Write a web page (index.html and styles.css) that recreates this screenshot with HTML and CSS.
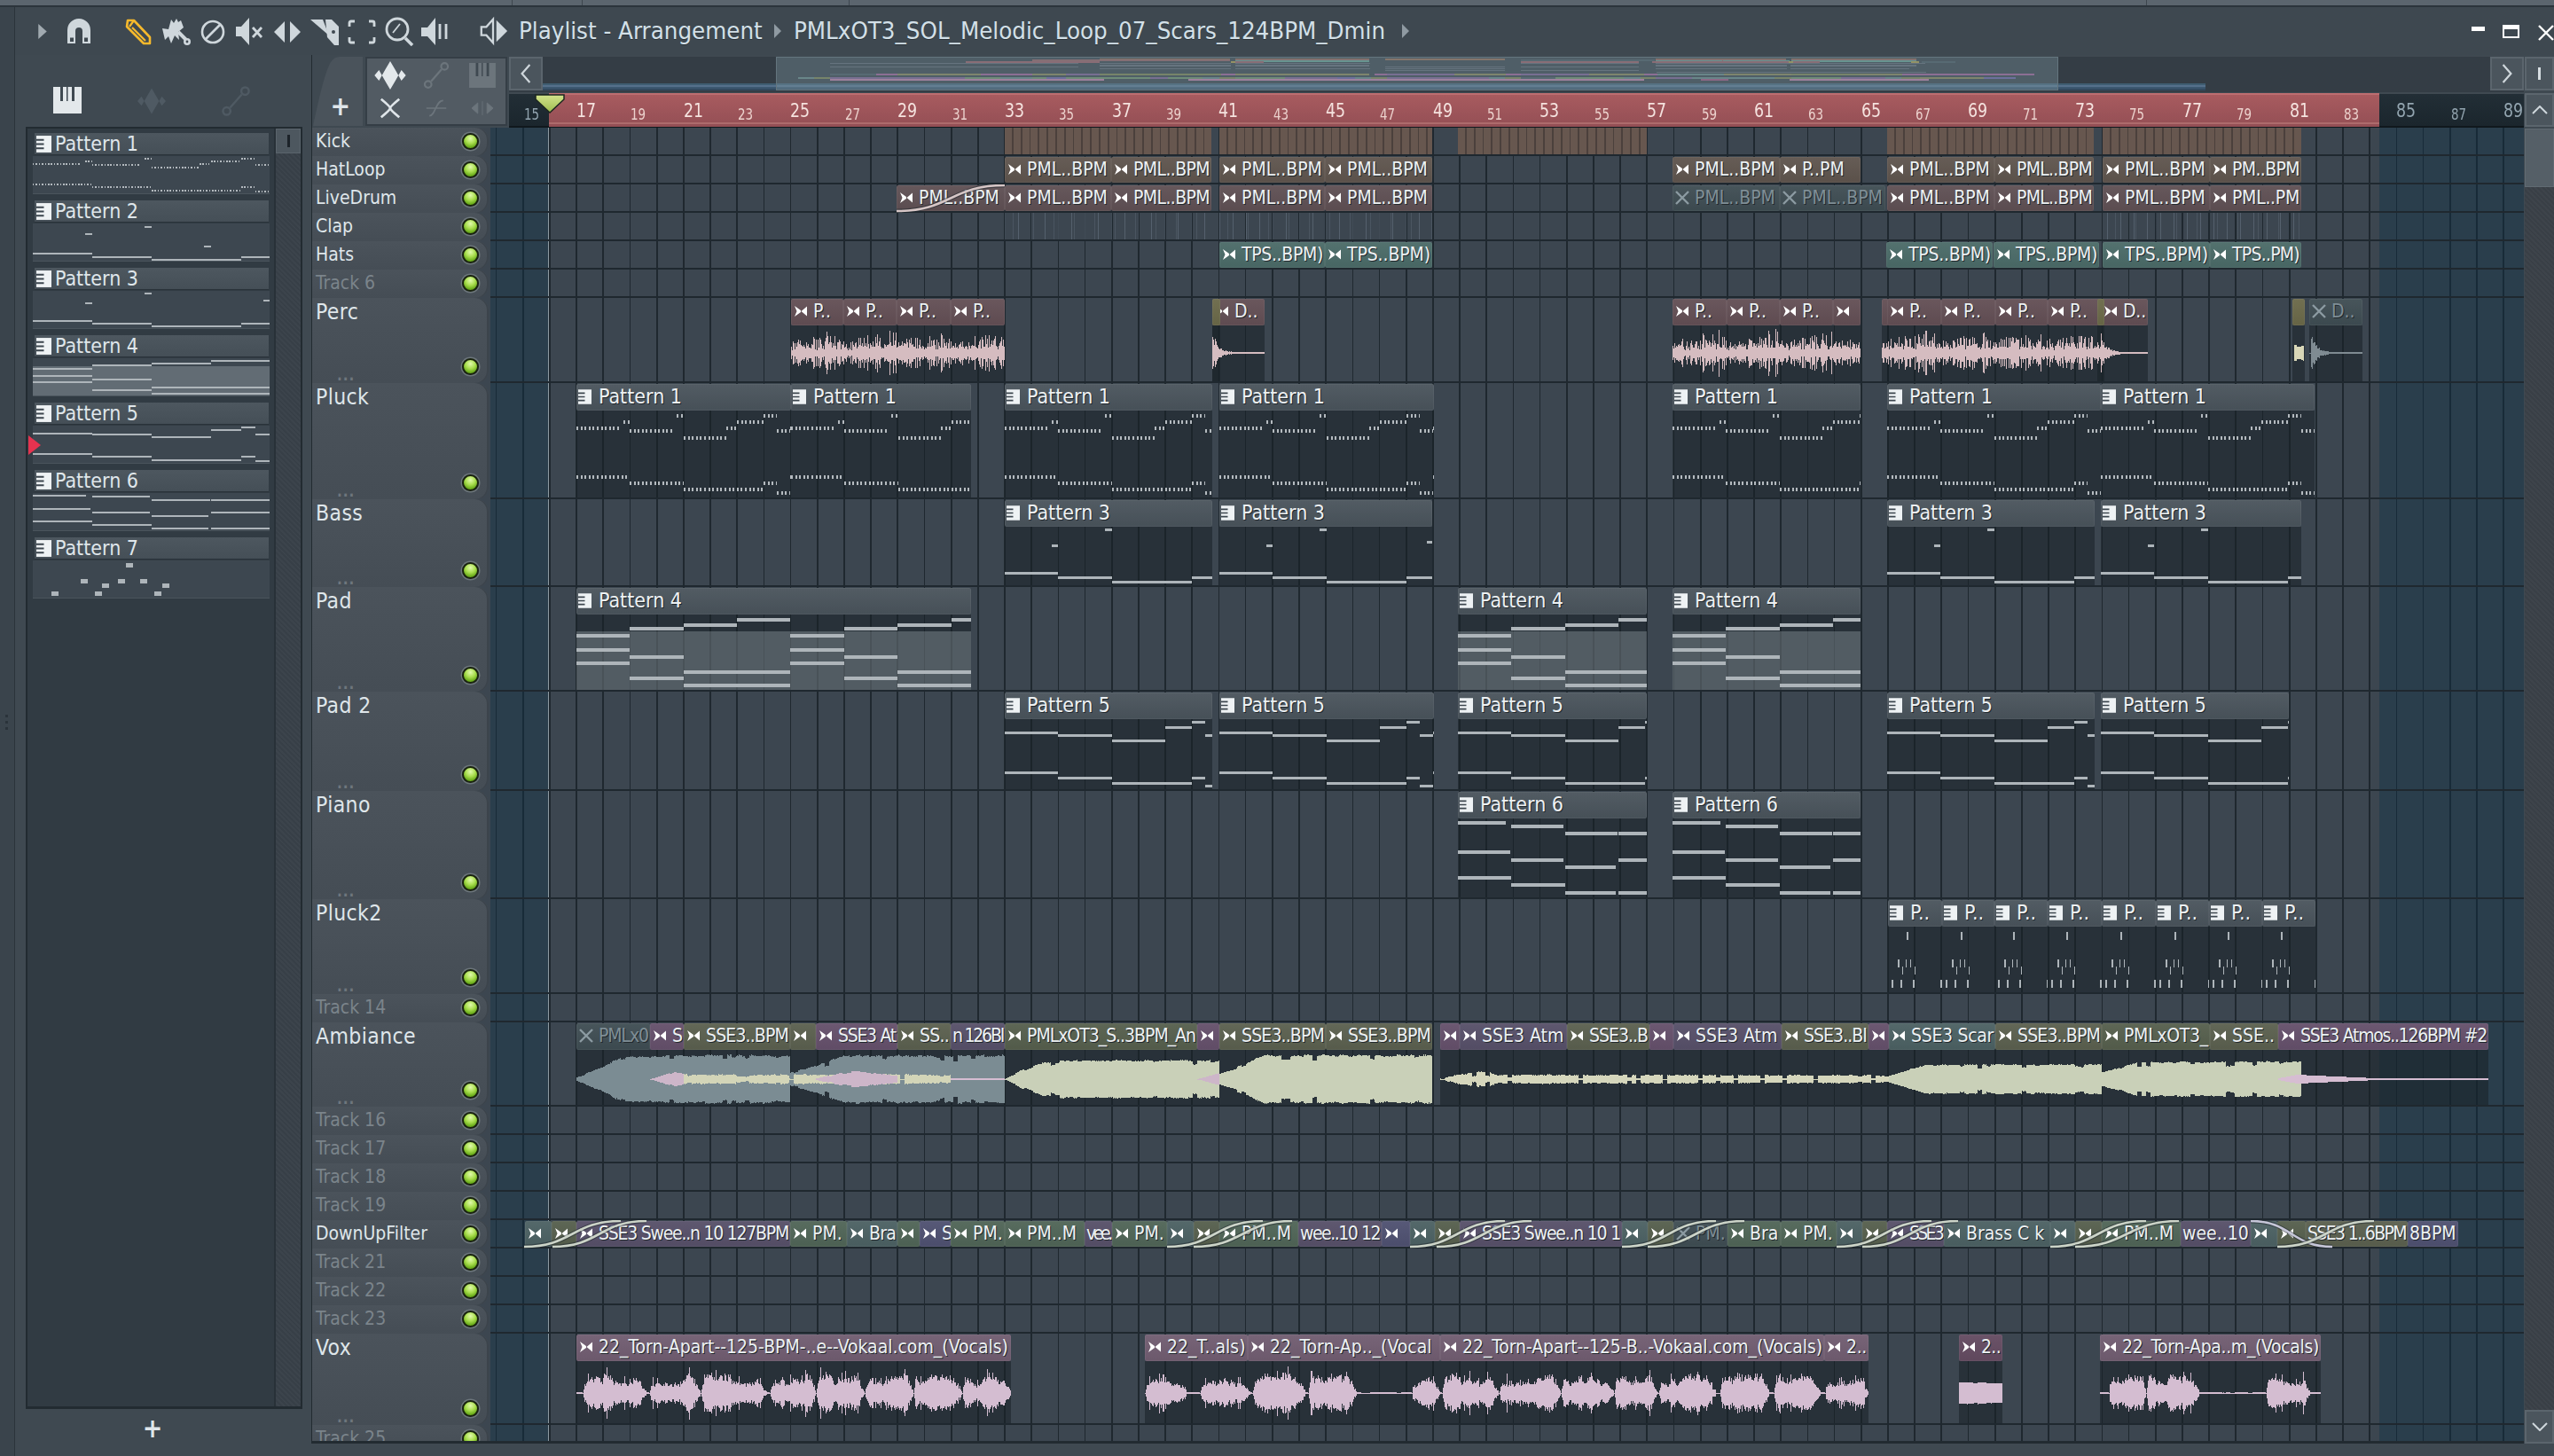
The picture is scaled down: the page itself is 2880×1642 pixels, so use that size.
FILE: index.html
```html
<!DOCTYPE html>
<html lang="en">
<head>
<meta charset="utf-8">
<title>Playlist - Arrangement</title>
<link rel="stylesheet" href="styles.css">
</head>
<body>
<svg class="defs" width="0" height="0" aria-hidden="true">
  <symbol id="i-audio" viewBox="0 0 18 18"><path d="M2 3 L9 8 L9 10 L2 15 L4.500 9Z M16 3.500 L9.500 9 L16 14.500 Z" fill="#fff"/></symbol>
  <symbol id="i-pat" viewBox="0 0 18 20"><path d="M0 0H18V20H0Z" fill="#eef2f4"/><path d="M0 4H9V6H0ZM0 9H9V11H0ZM0 14H9V16H0Z" fill="#3c464e"/></symbol>
  <symbol id="i-x" viewBox="0 0 18 18"><path d="M2 2 Q9 9 16 16 M16 2 Q9 9 2 16" stroke="#8c9ba2" stroke-width="2.400" fill="none"/></symbol>
  <symbol id="i-piano" viewBox="0 0 32 30"><path d="M0 0H32V30H0Z" fill="currentColor"/><path d="M8 0H11V16H8ZM15 0H16.500V16H15ZM21 0H24V16H21Z" fill="#3f4951"/></symbol>
  <symbol id="i-wave" viewBox="0 0 42 38"><path d="M0 19 L6 12 L10 19 L14 12 L21 0 L28 12 L32 19 L36 12 L42 19 L36 26 L32 19 L28 26 L21 38 L14 26 L10 19 L6 26Z" fill="currentColor"/></symbol>
  <symbol id="i-auto" viewBox="0 0 34 38"><circle cx="6" cy="31" r="4.500" fill="none" stroke="currentColor" stroke-width="2.600"/><circle cx="28" cy="7" r="4.500" fill="none" stroke="currentColor" stroke-width="2.600"/><path d="M10 27 L24 11" stroke="currentColor" stroke-width="2.600"/></symbol>
</svg>
<div class="app">
  <div class="top-strip"><span class="seg seg-a"></span><span class="seg seg-b"></span><span class="seg seg-c"></span><span class="seg seg-d"></span></div>
  <div class="win">
    <div class="dock"><span class="grip"></span></div>
    <div class="content">
      <header class="titlebar">
        <svg class="tb-arrow" viewBox="0 0 10 18"><path d="M0 0 L10 9 L0 18Z"/></svg>
        <svg class="tb tb-magnet" viewBox="0 0 40 34"><path d="M7 31 V16 A13 13 0 0 1 33 16 V31 H24 V17 A4 4 0 0 0 16 17 V31Z" fill="#cfd7dc"/><path d="M10 24.500 H14 V29 H10ZM26 24.500 H30 V29 H26Z" fill="#3f4951"/></svg>
        <svg class="tb tb-first" viewBox="0 0 40 34"><path d="M8 5 H15 L33 24 L33 31 L26 31 L7 12Z" fill="#3f4951" stroke="#f6b92c" stroke-width="2.600" stroke-linejoin="round"/><path d="M15 5 L10 12 M13 13 L28 28" stroke="#f6b92c" stroke-width="2.200"/></svg>
        <svg class="tb" viewBox="0 0 40 34"><path d="M5 14 L12 15 L15 4 L18 8 L21 3 L23 7 L26 5 L29 13 L23 18 L24 27 L19 22 L15 31 L12 23 L8 27Z" fill="#cfd7dc"/><path d="M23 18 L32 27" stroke="#cfd7dc" stroke-width="4"/><circle cx="33" cy="29" r="4" fill="#cfd7dc"/><circle cx="33" cy="29" r="1.400" fill="#3f4951"/></svg>
        <svg class="tb" viewBox="0 0 40 34"><circle cx="20" cy="18" r="12" fill="none" stroke="#cfd7dc" stroke-width="2.600"/><path d="M12 26 L28 10" stroke="#cfd7dc" stroke-width="2.600"/></svg>
        <svg class="tb" viewBox="0 0 40 34"><path d="M4 12 H10 L19 2 V33 L10 23 H4Z" fill="#cfd7dc"/><path d="M23 13 L33 24 M33 13 L23 24" stroke="#cfd7dc" stroke-width="2.800"/></svg>
        <svg class="tb" viewBox="0 0 40 34"><path d="M5 18 L17 6 V30Z M35 18 L23 6 V30Z" fill="#cfd7dc"/></svg>
        <svg class="tb" viewBox="0 0 40 34"><path d="M4 4 H18 L25 22 Z" fill="#cfd7dc"/><path d="M21 4 H28 L36 12 V33 H31 L23 24Z" fill="#cfd7dc"/><circle cx="30" cy="18" r="2" fill="#3f4951"/></svg>
        <svg class="tb" viewBox="0 0 40 34"><path d="M12 6 H8 Q6 6 6 8 V12 M28 6 H32 Q34 6 34 8 V12 M12 30 H8 Q6 30 6 28 V24 M28 30 H32 Q34 30 34 28 V24" fill="none" stroke="#cfd7dc" stroke-width="2.800"/></svg>
        <svg class="tb" viewBox="0 0 40 34"><circle cx="18" cy="15" r="12" fill="none" stroke="#cfd7dc" stroke-width="2.800"/><path d="M27 25 L35 33" stroke="#cfd7dc" stroke-width="3.500"/><path d="M13 19 L21 9" stroke="#cfd7dc" stroke-width="1.800"/></svg>
        <svg class="tb" viewBox="0 0 40 34"><path d="M3 13 H10 L19 2 V33 L10 23 H3Z" fill="#cfd7dc"/><path d="M24 9 V26 M31 9 V26" stroke="#cfd7dc" stroke-width="2.800"/></svg>
        <svg class="tb tb-spk" viewBox="0 0 40 36"><path d="M6 13 H12 L20 4 V32 L12 23 H6Z" fill="none" stroke="#cfd7dc" stroke-width="2.400"/><path d="M24 5 L37 18 L24 31Z" fill="#cfd7dc"/></svg>
        <span class="crumb crumb-a">Playlist - Arrangement</span>
        <svg class="crumb-arrow" viewBox="0 0 8 16"><path d="M0 0 L8 8 L0 16Z"/></svg>
        <span class="crumb crumb-b">PMLxOT3_SOL_Melodic_Loop_07_Scars_124BPM_Dmin</span>
        <svg class="crumb-arrow" viewBox="0 0 8 16"><path d="M0 0 L8 8 L0 16Z"/></svg>
        <span class="win-min"></span>
        <span class="win-max"></span>
        <svg class="win-close" viewBox="0 0 18 18"><path d="M1 1 L17 17 M17 1 L1 17" stroke="#fff" stroke-width="2.400"/></svg>
      </header>
      <div class="panes">
        <aside class="picker">
          <div class="picker-tabs">
            <svg class="ptab ptab-on"><use href="#i-piano"/></svg>
            <svg class="ptab"><use href="#i-wave"/></svg>
            <svg class="ptab"><use href="#i-auto"/></svg>
          </div>
          <div class="picker-list">
            <div class="pattern-col" id="patterns"></div>
            <div class="hatch-col"><span class="thumb-small"><i></i></span></div>
          </div>
          <div class="picker-add">+</div>
        </aside>
        <section class="playlist">
          <div class="pl-main">
            <div class="pl-head">
              <div class="tab"><span>+</span></div>
              <div class="tools">
                <svg class="tool"><use href="#i-wave"/></svg>
                <svg class="tool tool-dim"><use href="#i-auto"/></svg>
                <svg class="tool tool-dim tool-pno"><use href="#i-piano"/></svg>
                <svg class="tool tool-s" viewBox="0 0 26 28"><path d="M2 3 Q13 12 13 14 Q13 16 2 25 M24 3 Q13 12 13 14 Q13 16 24 25" fill="none" stroke="#dfe5e9" stroke-width="3"/></svg>
                <svg class="tool tool-s tool-dim" viewBox="0 0 30 28"><path d="M2 14 H28 M6 24 C14 24 14 4 24 4" fill="none" stroke="currentColor" stroke-width="2"/></svg>
                <svg class="tool tool-s tool-dim" viewBox="0 0 30 28"><path d="M1 14 L9 7 V21Z M29 14 L21 7 V21Z M15 5 V23" fill="currentColor" stroke="currentColor" stroke-width="1"/></svg>
              </div>
              <div class="timeline">
                <div class="ov-row">
                  <div class="ov-btn"><svg viewBox="0 0 12 20"><path d="M10 1 L2 10 L10 19" fill="none" stroke="#cfd7dc" stroke-width="2"/></svg></div>
                  <div class="ov-strip" id="overview"><div class="ov-band"></div><div class="ov-view"></div></div>
                  <div class="ov-btn"><svg viewBox="0 0 12 20"><path d="M2 1 L10 10 L2 19" fill="none" stroke="#cfd7dc" stroke-width="2"/></svg></div>
                </div>
                <div class="ruler" id="ruler">
                  <div class="ruler-red"></div>
                  <svg class="playhead" viewBox="0 0 34 22"><defs><linearGradient id="ph" x1="0" y1="0" x2="0" y2="1"><stop offset="0" stop-color="#d3e38c"/><stop offset="1" stop-color="#9dbb4e"/></linearGradient></defs><path d="M1 1 H33 V6 L17 21 L1 6Z" fill="url(#ph)" stroke="#1c2620" stroke-width="1.500"/></svg>
                </div>
              </div>
            </div>
            <div class="tracks" id="tracks">
              <div class="gridbg"><div class="tint tint-l"></div><div class="tint tint-r"></div><div class="play-line"></div></div>
            </div>
          </div>
          <div class="vscroll">
            <div class="vs-btn vs-i"><i></i></div>
            <div class="vs-btn vs-up"><svg viewBox="0 0 18 10"><path d="M1 9 L9 1 L17 9" fill="none" stroke="#cfd7dc" stroke-width="2"/></svg></div>
            <div class="vs-thumb"></div>
            <div class="vs-track"></div>
            <div class="vs-btn vs-dn"><svg viewBox="0 0 18 10"><path d="M1 1 L9 9 L17 1" fill="none" stroke="#cfd7dc" stroke-width="2"/></svg></div>
          </div>
        </section>
      </div>
    </div>
  </div>
</div>
<script src="app.js"></script>
</body>
</html>
```
FILE: styles.css
```css
* { box-sizing: border-box; }
html, body { margin: 0; padding: 0; background: #3f4951; }
body {
  width: 2880px; height: 1642px; overflow: hidden;
  font-family: "DejaVu Sans Condensed", "DejaVu Sans", sans-serif;
  font-stretch: condensed; color: #dfe6ea;
}
.defs { position: absolute; }
.app { width: 2880px; height: 1642px; display: flex; flex-direction: column; }

.top-strip { height: 8px; flex: none; background: #5b656e; border-bottom: 2px solid #2b343b; display: flex; }
.seg { display: block; height: 100%; border-right: 1px solid #3d464e; }
.seg-a { width: 578px; } .seg-b { width: 79px; } .seg-c { width: 301px; } .seg-d { width: 1463px; }

.win { flex: 1; display: flex; min-height: 0; }
.dock { width: 17px; flex: none; background: #3a444c; border-right: 1px solid #2b343b; position: relative; }
.grip { position: absolute; left: 6px; top: 798px; width: 3px; height: 18px; background: repeating-linear-gradient(#2a333a 0 3px, transparent 3px 7px); }
.content { flex: 1; display: flex; flex-direction: column; min-width: 0; }

.titlebar { height: 54px; flex: none; display: flex; align-items: center; background: #3e4850; }
.tb-arrow { width: 10px; height: 17px; fill: #a1aab0; margin-left: 26px; margin-right: 16px; }
.tb { width: 40px; height: 34px; margin-right: 2px; flex: none; }
.tb-first { margin-left: 27px; }
.tb-magnet { margin-right: 0; }
.tb-spk { margin-left: 22px; margin-right: 9px; }
.crumb { font-size: 27.4px; color: #d3e0e8; white-space: nowrap; line-height: 1; text-shadow: 0 1px 0 #2a3238; }
.crumb-a { width: 274px; flex: none; }
.crumb-b { width: 672px; flex: none; }
.crumb-arrow { width: 8px; height: 16px; fill: #8f9aa2; margin: 0 14px; flex: none; }
.win-min { margin-left: auto; width: 15px; height: 5px; background: #fff; align-self: flex-start; margin-top: 22px; }
.win-max { margin-left: 20px; width: 19px; height: 15px; border: 2px solid #fff; border-top-width: 5px; align-self: flex-start; margin-top: 20px; }
.win-close { margin-left: 21px; width: 18px; height: 18px; align-self: flex-start; margin-top: 20px; flex: none; }

.panes { flex: 1; display: flex; min-height: 0; padding-bottom: 14px; }

.picker { width: 334px; flex: none; display: flex; flex-direction: column; background: #3f4951; }
.picker-tabs { height: 81px; flex: none; display: flex; padding-left: 43px; align-items: flex-start; }
.ptab { width: 32px; height: 38px; margin-top: 33px; margin-right: 63px; color: #4f5a63; overflow: visible; }
.ptab-on { color: #e3e8eb; height: 30px; margin-top: 36px; }
.picker-list { margin-left: 12px; width: 312px; height: 1446px; flex: none; display: flex; border: 2px solid #222b31; border-bottom-width: 3px; background: #313b43; }
.pattern-col { flex: 1; padding: 5px 5px 0 6px; min-width: 0; }
.hatch-col { width: 30px; flex: none; border-left: 2px solid #283138; background: repeating-linear-gradient(45deg, #373f47 0 2px, #3c444c 2px 4px); }
.thumb-small { display: flex; height: 28px; background: #4d575f; border: 1px solid #5a646c; align-items: center; justify-content: center; }
.thumb-small i { display: block; width: 3px; height: 14px; background: #1c2329; }
.picker-add { flex: 1; text-align: center; font-size: 30px; font-weight: bold; line-height: 44px; color: #dfe6ea; padding-right: 24px; }

.pat-item { height: 76px; position: relative; }
.pat-head { height: 25px; margin: 0 1px 0 2px; background: linear-gradient(#4d575f, #454f57); border-bottom: 1px solid #2a333a; display: flex; align-items: center; padding-left: 2px; font-size: 23px; white-space: nowrap; color: #dfe6ea; }
.pat-icon { width: 17px; height: 19px; flex: none; margin-right: 4px; }
.pat-prev { height: 43px; margin-top: 1px; background: #3d4750; position: relative; overflow: hidden; border-bottom: 1px solid #4a545c; }
.pat-mark { position: absolute; left: -5px; top: 37px; width: 14px; height: 22px; background: #e5334f; clip-path: polygon(0 0, 100% 50%, 0 100%); }

.playlist { flex: 1; display: flex; min-width: 0; }
.pl-main { width: 2495px; flex: none; display: flex; flex-direction: column; border-left: 1px solid #222b31; border-bottom: 3px solid #222b31; }
.pl-head { height: 82px; flex: none; display: flex; padding-top: 2px; }
.tab { width: 58px; height: 78px; flex: none; background: #4a535b; clip-path: path("M0 78 C8 40 14 16 20 6 Q24 0 30 0 H56 V78Z"); display: flex; align-items: flex-end; justify-content: flex-end; padding-right: 16px; font-size: 30px; font-weight: bold; line-height: 44px; margin-left: 1px; }
.tools { width: 160px; height: 78px; flex: none; margin-left: 1px; margin-right: 2px; border: 2px solid #353e46; background: #525b63; display: grid; grid-template-columns: repeat(3, 1fr); grid-template-rows: 1fr 1fr; place-items: center; color: #e3e8eb; }
.tool { width: 38px; height: 32px; }
.tool-dim { color: #6c757c; }
.tool-pno { width: 30px; height: 28px; }
.tool-s { width: 26px; height: 26px; }

.timeline { flex: 1; min-width: 0; display: flex; flex-direction: column; }
.ov-row { height: 40px; flex: none; display: flex; background: #343d45; }
.ov-btn { width: 38px; height: 38px; flex: none; background: #4b555d; border: 2px solid #5b656d; display: flex; align-items: center; justify-content: center; }
.ov-btn svg { width: 14px; height: 22px; }
.ov-strip { flex: 1; position: relative; overflow: hidden; }
.ov-band { position: absolute; left: 0; width: 1875px; top: 30px; height: 8px; background: linear-gradient(#3f5d72 0 25%, #55708a 25% 50%, #3c5870 50% 75%, #33495e 75%); }
.ov-view { position: absolute; left: 263px; width: 1446px; top: 0; height: 38px; background: rgba(124,150,160,.38); border: 1px solid #64757e; }
.mini { position: absolute; height: 1.5px; background: var(--c); filter: brightness(1.4); }
.ruler { height: 38px; margin-top: 2px; flex: none; position: relative; background: linear-gradient(#222e36, #1b262d); border-bottom: 2px solid #10181d; }
.ruler-red { position: absolute; left: 45px; width: 2064px; top: -1px; bottom: -1px; background: linear-gradient(#bd6e70 0 2px, #a85b5f 2px, #965056 88%, #ad6b6c 88% 92%, #944f55 92%); }
.playhead { position: absolute; left: 29px; top: 0; width: 34px; height: 22px; z-index: 3; overflow: visible; }
.rl { position: absolute; top: 7px; line-height: 28px; white-space: nowrap; z-index: 2; }
.rl-big { font-size: 22px; color: #f5e3df; top: 5px; transform: scaleX(.88); transform-origin: 0 50%; }
.rl-small { font-size: 17px; color: #ecd2cd; top: 9px; transform: scaleX(.88); transform-origin: 0 50%; }
.rl-off { color: #93a5b0; }

.tracks { flex: 1; min-height: 0; position: relative; overflow: hidden; background: #3c4650; }
.gridbg { position: absolute; left: 201px; right: 0; top: 0; bottom: 0; background: repeating-linear-gradient(90deg, transparent 0, transparent 5.760px, #1f282f 5.760px, #1f282f 7.460px, transparent 7.460px, transparent 30.180px); }
.tint { position: absolute; top: 0; bottom: 0; background: rgba(12,50,72,.38); }
.tint-l { left: 0; width: 66px; }
.tint-r { left: 2130px; right: 0; }
.play-line { position: absolute; left: 65px; top: 0; bottom: 0; width: 1px; background: #8d9aa2; z-index: 1; }

.row { display: flex; position: relative; z-index: 2; flex: none; }
.label { width: 199px; flex: none; margin-right: 2px; position: relative; display: flex; align-items: flex-start; justify-content: space-between; padding-left: 4px; padding-right: 11px; background: linear-gradient(#4b535b, #454d55); border-radius: 0 14px 14px 0; box-shadow: inset -2px 0 0 #3c444c; }
.label-name { font-size: 21px; line-height: 31px; color: #dfe6ea; white-space: nowrap; }
.row-big .label-name { font-size: 24.5px; letter-spacing: .4px; }
.row-dim .label-name { color: #7b848b; }
.dots { position: absolute; left: 28px; bottom: 2px; font-size: 17px; line-height: 14px; font-weight: bold; color: #6e767d; letter-spacing: 1px; }
.led { width: 19px; height: 19px; flex: none; align-self: flex-end; margin-bottom: 7px; border-radius: 50%; border: 2px solid #1a240f; box-shadow: 0 0 0 1.5px #6c757b; background: radial-gradient(circle at 50% 28%, #e0f9ac 0, #a9de4e 42%, #69ab1a 75%); }
.row-big .led { margin-bottom: 9px; }
.lane { flex: 1; position: relative; border-bottom: 2px solid #1f282f; min-width: 0; }
.wave { position: absolute; left: 0; top: 0; z-index: 3; }

.clip { position: absolute; top: 1px; display: flex; flex-direction: column; overflow: hidden; }
.clip-small { bottom: 0; }
.clip-big { bottom: 0; }
.clip-head { height: 30px; flex: none; background: linear-gradient(rgba(255,255,255,.05), rgba(0,0,0,.04)), var(--c); border-radius: 2px; box-shadow: inset 0 0 0 1px rgba(255,255,255,.05); display: flex; align-items: center; padding: 0 0 2px 2px; overflow: hidden; white-space: nowrap; font-size: 21px; color: #edf1f3; text-shadow: 1px 1px 0 #20272c; }
.clip-small .clip-head { height: 100%; }
.clip-pattern .clip-head { font-size: 23px; }
.clip-icon { width: 18px; height: 18px; flex: none; margin-right: 5px; }
.clip-picon { width: 15px; height: 19px; flex: none; margin-right: 8px; }
.clip-body { flex: 1; position: relative; background: rgba(24,32,38,.55); overflow: hidden; }

.c-brown { --c: #5e544d; } .c-rose { --c: #5e4f53; } .c-perc { --c: #624e54; } .c-teal { --c: #4a6a67; }
.c-pat { --c: #49535b; } .c-pink { --c: #644f6a; } .c-olive { --c: #5a5f4e; } .c-moss { --c: #555e4c; }
.c-purple { --c: #564f68; } .c-green { --c: #4f6456; } .c-slate { --c: #4b6062; } .c-blue { --c: #4e5070; }
.c-vox { --c: #705c70; } .c-mute { --c: #3e4c52; } .c-khaki { --c: #6a6848; } .c-voxd { --c: #634a60; }
.c-mute .clip-head { color: #7f8e96; }
.kick { position: absolute; top: 0; bottom: 0; background: repeating-linear-gradient(90deg, #67574f 0, #67574f 8px, #4b403c 8px, #4b403c 9.800px); }
.clap { position: absolute; top: 0; bottom: 0; background: repeating-linear-gradient(90deg, rgba(150,165,185,.28) 0 1px, transparent 1px 15px), repeating-linear-gradient(90deg, transparent 0 9px, rgba(150,165,185,.16) 9px 10px, transparent 10px 23px); }
.curve { position: absolute; left: 0; top: 0; z-index: 4; }

.note { position: absolute; background: #aeb5ba; }
.tick { background: repeating-linear-gradient(90deg, #b4babf 0 2px, transparent 2px 4.600px); }
.pat-prev .tick { background: repeating-linear-gradient(90deg, #b4babf 0 1.500px, transparent 1.500px 3.400px); }
.wash { position: absolute; top: 22%; bottom: 0; background: rgba(205,215,220,.26); }

.vscroll { flex: 1; display: flex; flex-direction: column; padding-top: 2px; padding-left: 1px; min-width: 0; }
.vs-btn { height: 38px; flex: none; background: #4b555d; border: 2px solid #5b656d; display: flex; align-items: center; justify-content: center; }
.vs-btn svg { width: 18px; height: 10px; }
.vs-i i { display: block; width: 3px; height: 14px; background: #d6dde1; }
.vs-up { margin-top: 3px; }
.vs-thumb { height: 66px; flex: none; margin-top: 2px; background: #555f67; border: 1px solid #606a72; }
.vs-track { flex: 1; background: repeating-linear-gradient(45deg, #393f46 0 2px, #3e444b 2px 4px); }
```
FILE: app.js
```js
var LANE_X = 553, BAR = 30.18;
function bx(b) { return 650 + (b - 17) * BAR; }

var seed = 12345;
function rnd() { seed = (seed * 16807) % 2147483647; return (seed - 1) / 2147483646; }

/* ---- pattern note data: [start bar, end bar, vertical position] ---- */
var PAT = {
  1: { tick: 1, th: 4, n: [[0,1.6,.19],[1.75,2,.12],[2,3.6,.23],[3.75,4,.04],[4,5.6,.31],[5.6,5.95,.19],[6,7,.12],[7,7.5,.04],[7.5,8,.23],[0,2,.78],[2,4,.86],[4,7,.94],[7,7.5,.86],[7.5,8,.98]] },
  2: { th: 3, n: [[0,2,.82],[2,4,.92],[4,7,1],[7,8,.92],[1.75,2,.28],[3.75,4,.08],[5.75,6,.62]] },
  3: { th: 3, n: [[0,2,.82],[2,4,.9],[4,7,.985],[7,8,.9],[1.75,2,.33],[3.75,4,.04],[7.75,8,.25]] },
  4: { th: 4, wash: 1, n: [[0,2,.27],[0,2,.48],[0,2,.66],[2,4,.17],[2,4,.57],[2,4,.88],[4,6,.13],[4,8,.79],[4,8,.97],[6,8,.05]] },
  5: { th: 3, n: [[0,2,.19],[2,4,.22],[4,6,.31],[6,7,.105],[7,7.5,.03],[7.5,8,.22],[0,2,.78],[2,4,.86],[4,7,.94],[7,7.5,.86],[7.5,8,.98]] },
  6: { th: 4, n: [[0,1.8,.04],[2,3.95,.085],[4,5.97,.18],[6,8,.18],[0,1.95,.43],[2,3.95,.53],[4,5.9,.63],[6,8,.53],[0,2,.77],[2,4,.87],[4,5.9,.975],[6,8,.975]] },
  7: { th: 9, n: [[.62,.87,.94],[1.6,1.85,.58],[2.08,2.33,.94],[2.32,2.57,.7],[2.86,3.11,.58],[3.12,3.37,.09],[3.6,3.85,.58],[4.08,4.33,.94],[4.36,4.61,.7]] }
};

function drawNotes(host, id, unit, H, th, span) {
  var p = PAT[id], total = span || unit * 8, loop = unit * 8;
  for (var k = 0; k * loop < total; k++) {
    var off = k * loop;
    if (p.wash) {
      var w = document.createElement('div');
      w.className = 'wash';
      w.style.left = off + 'px';
      w.style.width = loop + 'px';
      host.appendChild(w);
    }
    p.n.forEach(function (n) {
      var e = document.createElement('div');
      e.className = p.tick ? 'note tick' : 'note';
      e.style.left = (off + n[0] * unit) + 'px';
      e.style.width = ((n[1] - n[0]) * unit) + 'px';
      e.style.top = (n[2] * (H - th)) + 'px';
      e.style.height = th + 'px';
      host.appendChild(e);
    });
  }
}

/* ---- pattern picker ---- */
var list = document.getElementById('patterns');
for (var i = 1; i <= 7; i++) {
  var it = document.createElement('div');
  it.className = 'pat-item';
  it.innerHTML = '<div class="pat-head"><svg class="pat-icon"><use href="#i-pat"/></svg>Pattern ' + i + '</div><div class="pat-prev"></div>' + (i === 5 ? '<div class="pat-mark"></div>' : '');
  list.appendChild(it);
  var prev = it.querySelector('.pat-prev');
  drawNotes(prev, i, 33.5, 42, i === 7 ? 5 : 2, 0);
}

/* ---- ruler ---- */
var ruler = document.getElementById('ruler');
for (var b = 15; b <= 89; b += 2) {
  var s = document.createElement('span');
  var big = (b - 17) % 4 === 0;
  s.className = 'rl ' + (big ? 'rl-big' : 'rl-small') + ((b > 83 || b < 17) ? ' rl-off' : '');
  s.textContent = b;
  s.style.left = (bx(b) - 574 + (big ? 0 : 1)) + 'px';
  ruler.appendChild(s);
}

/* ---- tracks ---- */
var A = 'a', P = 'p', X = 'x';
function pat(id, xs) { return xs.map(function (x) { return [x[0], x[1], 'pat', 'Pattern ' + id, P, id]; }); }

var HAT = [[1133,1253,'PML..BPM'],[1253,1366,'PML..BPM'],[1375,1494,'PML..BPM'],[1494,1615,'PML..BPM'],[1886,2007,'PML..BPM'],[2007,2098,'P..PM'],[2128,2249,'PML..BPM'],[2249,2361,'PML..BPM'],[2371,2492,'PML..BPM'],[2492,2595,'PM..BPM']];
var LIVE = [[1011,1133,'PML..BPM'],[1133,1253,'PML..BPM'],[1253,1366,'PML..BPM'],[1375,1494,'PML..BPM'],[1494,1615,'PML..BPM'],[1886,2007,'PML..BPM',1],[2007,2126,'PML..BPM',1],[2128,2249,'PML..BPM'],[2249,2361,'PML..BPM'],[2371,2492,'PML..BPM'],[2492,2595,'PML..PM']];

var ROWS = [
  { n: 'Kick', h: 32, kick: [[1133,1366],[1375,1615],[1644,1857],[2128,2361],[2371,2595]] },
  { n: 'HatLoop', h: 32, clips: HAT.map(function (c) { return [c[0], c[1], 'brown', c[2], A]; }) },
  { n: 'LiveDrum', h: 32, clips: LIVE.map(function (c) { return [c[0], c[1], c[3] ? 'mute' : 'rose', c[2], c[3] ? X : A]; }), curves: [[1011,1133,'#d6c6c6',0]] },
  { n: 'Clap', h: 32, clap: [[1133,1366],[1375,1615],[2376,2595]] },
  { n: 'Hats', h: 32, clips: [[1375,1494,'teal','TPS..BPM)',A],[1494,1615,'teal','TPS..BPM)',A],[2127,2247,'teal','TPS..BPM)',A],[2248,2367,'teal','TPS..BPM)',A],[2371,2492,'teal','TPS..BPM)',A],[2492,2595,'teal','TPS..PM)',A]] },
  { n: 'Track 6', h: 32, dim: 1 },
  { n: 'Perc', h: 96, big: 1, clips: [
    [892,951,'perc','P..',A],[951,1011,'perc','P..',A],[1011,1072,'perc','P..',A],[1072,1133,'perc','P..',A],
    [1367,1426,'perc','D..',A],[1367,1376,'khaki','',0],
    [1886,1947,'perc','P..',A],[1947,2007,'perc','P..',A],[2007,2067,'perc','P..',A],[2067,2098,'perc','',A],
    [2122,2130,'perc','',0],[2128,2189,'perc','P..',A],[2189,2250,'perc','P..',A],[2250,2309,'perc','P..',A],[2309,2369,'perc','P..',A],
    [2369,2422,'perc','D..',A],[2365,2373,'khaki','',0],
    [2585,2599,'khaki','',0],[2604,2664,'mute','D..',X]] },
  { n: 'Pluck', h: 131, big: 1, clips: pat(1, [[650,892],[892,1095],[1133,1367],[1375,1617],[1886,2098],[2128,2369],[2369,2610]]) },
  { n: 'Bass', h: 99, big: 1, clips: pat(3, [[1133,1367],[1375,1615],[2128,2362],[2369,2595]]) },
  { n: 'Pad', h: 118, big: 1, clips: pat(4, [[650,1095],[1644,1857],[1886,2098]]) },
  { n: 'Pad 2', h: 112, big: 1, clips: pat(5, [[1133,1367],[1375,1617],[1644,1857],[2128,2362],[2369,2581]]) },
  { n: 'Piano', h: 122, big: 1, clips: pat(6, [[1644,1857],[1886,2098]]) },
  { n: 'Pluck2', h: 107, big: 1, clips: [2129,2190,2249,2309,2370,2431,2491,2551].map(function (x, i, a) { return [x, a[i + 1] || 2611, 'pat', 'P..', P, 7]; }) },
  { n: 'Track 14', h: 32, dim: 1 },
  { n: 'Ambiance', h: 95, big: 1, clips: [
    [650,733,'mute','PMLx0',X],[733,771,'pink','S',A],[771,891,'olive','SSE3..BPM',A],[891,920,'olive','',A],
    [920,1012,'pink','SSE3 At',A],[1012,1072,'olive','SS..',A],[1072,1133,'purple','n 126BI',0],
    [1133,1350,'moss','PMLxOT3_S..3BPM_An',A],[1350,1375,'pink','',A],[1375,1495,'olive','SSE3..BPM',A],[1495,1615,'olive','SSE3..BPM',A],
    [1624,1646,'pink','',A],[1646,1767,'purple','SSE3 Atm',A],[1767,1860,'olive','SSE3..B',A],[1860,1887,'pink','',A],
    [1887,2009,'purple','SSE3 Atm',A],[2009,2107,'olive','SSE3..BI',A],[2107,2130,'pink','',A],[2130,2250,'slate','SSE3 Scar',A],
    [2250,2370,'olive','SSE3..BPM',A],[2370,2492,'moss','PMLxOT3_',A],[2492,2569,'olive','SSE..',A],[2569,2806,'pink','SSE3 Atmos..126BPM #2',A]] },
  { n: 'Track 16', h: 32, dim: 1 },
  { n: 'Track 17', h: 32, dim: 1 },
  { n: 'Track 18', h: 32, dim: 1 },
  { n: 'Track 19', h: 32, dim: 1 },
  { n: 'DownUpFilter', h: 32, clips: [
    [592,622,'slate','',A],[622,650,'moss','',A],[650,891,'purple','SSE3 Swee..n 10 127BPM',A],
    [891,955,'green','PM.',A],[955,1012,'slate','Bra',A],[1012,1037,'green','',A],[1037,1072,'blue','S',A],[1072,1133,'green','PM.',A],
    [1133,1223,'green','PM..M',A],[1223,1254,'purple','vee.',0],[1254,1316,'green','PM.',A],[1316,1346,'slate','',A],[1346,1375,'moss','',A],
    [1375,1464,'green','PM..M',A],[1464,1558,'purple','wee..10 12',0],[1558,1590,'blue','',A],[1590,1618,'slate','',A],[1618,1646,'moss','',A],
    [1646,1829,'purple','SSE3 Swee..n 10 1',A],[1829,1858,'slate','',A],[1858,1887,'moss','',A],[1887,1948,'mute','PM.',X],
    [1948,2008,'green','Bra',A],[2008,2071,'green','PM.',A],[2071,2100,'slate','',A],[2100,2128,'moss','',A],[2128,2192,'purple','SSE3',A],
    [2192,2312,'slate','Brass C k',A],[2312,2340,'slate','',A],[2340,2370,'moss','',A],[2370,2459,'green','PM..M',A],
    [2459,2538,'purple','wee..10',0],[2538,2568,'slate','',A],[2568,2600,'moss','',A],[2600,2715,'olive','SSE3 1..6BPM',0],[2715,2772,'blue','8BPM',0]],
    curves: [[591,700,'#ccd4c8',1],[623,729,'#ccd4c8',1],[1316,1424,'#ccd4c8',1],[1346,1457,'#ccd4c8',1],[1590,1697,'#ccd4c8',1],[1620,1727,'#ccd4c8',1],[1829,1935,'#ccd4c8',1],[1858,1967,'#ccd4c8',1],[2071,2178,'#ccd4c8',1],[2100,2208,'#ccd4c8',1],[2312,2420,'#ccd4c8',1],[2340,2457,'#ccd4c8',1],[2538,2630,'#c6c6d8',2],[2568,2677,'#ccd4c8',1]] },
  { n: 'Track 21', h: 32, dim: 1 },
  { n: 'Track 22', h: 32, dim: 1 },
  { n: 'Track 23', h: 32, dim: 1 },
  { n: 'Vox', h: 103, big: 1, clips: [
    [650,1140,'vox','22_Torn-Apart--125-BPM-..e--Vokaal.com_(Vocals)',A],[1291,1407,'vox','22_T..als)',A],[1407,1624,'vox','22_Torn-Ap.._(Vocal',A],
    [1624,2057,'vox','22_Torn-Apart--125-B..-Vokaal.com_(Vocals)',A],[2057,2107,'vox','2..',A],[2209,2258,'voxd','2..',A],[2368,2617,'vox','22_Torn-Apa..m_(Vocals)',A]] },
  { n: 'Track 25', h: 32, dim: 1 }
];

var tracksEl = document.getElementById('tracks');
var ovEl = document.getElementById('overview');
var rowEls = {};
var rowTop = 144;
var labels = [];

function icon(ic) {
  if (ic === A) return '<svg class="clip-icon"><use href="#i-audio"/></svg>';
  if (ic === X) return '<svg class="clip-icon"><use href="#i-x"/></svg>';
  if (ic === P) return '<svg class="clip-picon"><use href="#i-pat"/></svg>';
  return '';
}

function addMini(cls, a, z, top) {
  var m = document.createElement('div');
  m.className = 'mini ' + cls;
  m.style.left = (263 + (a - LANE_X) * 0.63) + 'px';
  m.style.width = ((z - a) * 0.63) + 'px';
  m.style.top = (2 + (top - 144) * 0.0172) + 'px';
  ovEl.appendChild(m);
}

ROWS.forEach(function (r) {
  var row = document.createElement('div');
  row.className = 'row' + (r.big ? ' row-big' : '') + (r.dim ? ' row-dim' : '');
  row.style.height = r.h + 'px';
  row.innerHTML = '<div class="label"><span class="label-name">' + r.n + '</span>' + (r.big ? '<span class="dots">...</span>' : '') + '<span class="led"></span></div><div class="lane"></div>';
  var lane = row.querySelector('.lane');
  rowEls[r.n] = lane;

  (r.kick || []).forEach(function (c) {
    var k = document.createElement('div');
    k.className = 'kick';
    k.style.left = (c[0] - LANE_X) + 'px';
    k.style.width = (c[1] - c[0]) + 'px';
    lane.appendChild(k);
    addMini('c-brown', c[0], c[1], rowTop);
  });
  (r.clap || []).forEach(function (c) {
    var k = document.createElement('div');
    k.className = 'clap';
    k.style.left = (c[0] - LANE_X) + 'px';
    k.style.width = (c[1] - c[0]) + 'px';
    lane.appendChild(k);
  });
  (r.clips || []).forEach(function (c) {
    var el = document.createElement('div');
    el.className = 'clip c-' + c[2] + (r.big ? ' clip-big' : ' clip-small') + (c[4] === P ? ' clip-pattern' : '');
    el.style.left = (c[0] - LANE_X) + 'px';
    el.style.width = (c[1] - c[0]) + 'px';
    el.innerHTML = '<div class="clip-head">' + icon(c[4]) + (c[3] ? '<span class="clip-text">' + c[3] + '</span>' : '') + '</div>' + (r.big ? '<div class="clip-body"></div>' : '');
    lane.appendChild(el);
    if (c[5]) {
      var H = r.h - 34;
      var unit = c[5] === 7 ? 6.875 : BAR;
      var th = PAT[c[5]].th;
      var bodyEl = el.querySelector('.clip-body');
      drawNotes(bodyEl, c[5], unit, H, th, c[1] - c[0]);
      if (c[5] === 7) Array.prototype.forEach.call(bodyEl.querySelectorAll('.note'), function (n) { n.style.width = '1.5px'; });
    }
    addMini('c-' + c[2], c[0], c[1], rowTop);
    var sp = el.querySelector('.clip-text');
    if (sp) labels.push([sp, c[1] - c[0], c[4]]);
  });
  if (r.curves) {
    var s = '<svg class="curve" width="2293" height="32">';
    r.curves.forEach(function (q) {
      var a = q[0] - LANE_X, z = q[1] - LANE_X, m = (a + z) / 2;
      var d = q[3] === 2 ? 'M' + a + ' 1 C' + m + ' 1 ' + m + ' 30 ' + z + ' 30' : 'M' + a + ' 30 C' + m + ' 30 ' + m + ' 1 ' + z + ' 1';
      s += '<path d="' + d + '" fill="none" stroke="#20282d" stroke-width="5" opacity=".5"/><path d="' + d + '" fill="none" stroke="' + q[2] + '" stroke-width="2.600"/>';
    });
    lane.insertAdjacentHTML('beforeend', s + '</svg>');
  }
  tracksEl.appendChild(row);
  rowTop += r.h;
});

/* clip names squeeze a little to fit their clip, as the host app does */
labels.forEach(function (l) {
  var sp = l[0];
  var start = l[2] === A || l[2] === X ? 25 : (l[2] === P ? 25 : 2);
  var room = l[1] - start - 2;
  var w = sp.getBoundingClientRect().width;
  if (w > room) sp.style.letterSpacing = ((room - w) / sp.textContent.length) + 'px';
});

/* ---- waveforms ---- */
function keys(k) {
  return function (x) {
    for (var i = 0; i < k.length - 1; i++) {
      if (x >= k[i][0] && x <= k[i + 1][0]) {
        var t = (x - k[i][0]) / Math.max(1, k[i + 1][0] - k[i][0]);
        return k[i][1] + (k[i + 1][1] - k[i][1]) * t;
      }
    }
    return 0;
  };
}
function trace(a, z, cy, fn, jag) {
  var d = '', slow = 1;
  for (var x = a; x < z; x++) {
    if (x % 5 === 0) slow = 1 - jag * rnd() * (rnd() < .22 ? 1.6 : .35);
    var v = fn(x);
    var u = v * slow * (1 - jag * .3 * rnd());
    var l = v * slow * (1 - jag * .3 * rnd());
    var X0 = x - LANE_X + .5;
    d += 'M' + X0 + ' ' + (cy - Math.max(u, .5)).toFixed(1) + 'V' + (cy + Math.max(l, .5)).toFixed(1);
  }
  return d;
}
function draw(name, h, layers) {
  var s = '<svg class="wave" width="2293" height="' + h + '">';
  layers.forEach(function (p) { s += '<path d="' + p[0] + '" stroke="' + p[1] + '" stroke-width="1" fill="none" shape-rendering="crispEdges"/>'; });
  rowEls[name].insertAdjacentHTML('beforeend', s + '</svg>');
}

/* Perc */
function percAmp(x0) {
  return function (x) {
    var t = (x - x0) % 60;
    var q = rnd();
    return 3 + 5 * rnd() + q * q * 21 * (.35 + .65 * t / 60);
  };
}
function decay(x0, a) { return function (x) { var t = x - x0; return t < 0 ? 0 : .8 + a * Math.exp(-t / 6) * (.4 + .6 * rnd()); }; }
draw('Perc', 94, [
  [trace(892, 1133, 62, percAmp(892), 0), '#d5bcc0'],
  [trace(1367, 1426, 62, decay(1367, 26), 0), '#d5bcc0'],
  [trace(1886, 2098, 62, percAmp(1886), 0), '#d5bcc0'],
  [trace(2122, 2369, 62, percAmp(2122), 0), '#d5bcc0'],
  [trace(2369, 2422, 62, decay(2369, 25), 0), '#d5bcc0'],
  [trace(2587, 2598, 62, function () { return 9; }, .15), '#d9d7b8'],
  [trace(2604, 2664, 62, decay(2606, 26), 0), '#7f8b92']
]);

/* Ambiance */
draw('Ambiance', 93, [
  [trace(650, 1133, 64, keys([[650,2],[680,15],[700,26],[770,28],[890,28],[891,8],[920,16],[950,28],[1133,28]]), .18), '#7b8c93'],
  [trace(771, 1072, 64, keys([[771,6],[1072,6]]), .6), '#d3d5b8'],
  [trace(733, 771, 64, keys([[733,0],[760,9],[771,6]]), .2), '#cdb6c9'],
  [trace(920, 1012, 64, keys([[920,1],[960,10],[1012,4]]), .2), '#cdb6c9'],
  [trace(1072, 1133, 64, function () { return .6; }, 0), '#d6bdd2'],
  [trace(1133, 1375, 64, keys([[1133,0],[1150,10],[1175,19],[1195,22],[1365,22],[1375,22]]), .16), '#c9d0b8'],
  [trace(1350, 1375, 64, keys([[1350,0],[1375,7]]), 0), '#cdb6c9'],
  [trace(1375, 1615, 64, keys([[1375,6],[1395,15],[1425,28],[1615,28]]), .17), '#c9d0b8'],
  [trace(1624, 2130, 64, keys([[1624,1],[1665,11],[1690,6],[2130,5]]), .6), '#d5d6bc'],
  [trace(2130, 2370, 64, keys([[2130,4],[2171,17],[2370,18]]), .18), '#c9d0b8'],
  [trace(2370, 2595, 64, keys([[2370,8],[2410,20],[2595,21]]), .18), '#c9d0b8'],
  [trace(2569, 2806, 64, keys([[2569,1],[2590,5],[2680,1],[2806,.6]]), 0), '#d6bdd2']
]);

/* Vox */
function phrases(list) {
  var walk = .8;
  return function (x) {
    for (var i = 0; i < list.length; i++) {
      var a = list[i][0], z = list[i][1], A0 = list[i][2] || 24;
      if (x >= a && x < z) {
        var t = (x - a) / (z - a);
        var e = Math.min(1, t * 20) * (t > .86 ? (.08 + (1 - t) / .14 * .92) : 1);
        walk += (rnd() - .5) * .3;
        walk = Math.max(.5, Math.min(1, walk));
        return A0 * e * walk * (.62 + .38 * rnd()) + (rnd() < .06 ? 8 * e : 0);
      }
    }
    return .6;
  };
}
draw('Vox', 101, [
  [trace(650, 1140, 67, phrases([[657,730],[732,790],[790,865],[868,920],[920,975],[975,1030],[1030,1085],[1085,1140]]), .1), '#d4bdd1'],
  [trace(1291, 1624, 67, phrases([[1291,1338,20],[1353,1410,22],[1412,1472],[1475,1530,24],[1592,1624,20]]), .1), '#d4bdd1'],
  [trace(1624, 2107, 67, phrases([[1626,1690],[1690,1760],[1760,1820,24],[1820,1869],[1870,1935],[1939,1995],[2000,2053],[2058,2107]]), .1), '#d4bdd1'],
  [trace(2209, 2258, 67, function (x) { return 13 - Math.abs(x - 2225) * .06; }, .08), '#d4bdd1'],
  [trace(2368, 2617, 67, phrases([[2378,2420],[2420,2480,24],[2555,2605,24]]), .1), '#d4bdd1']
]);
```
